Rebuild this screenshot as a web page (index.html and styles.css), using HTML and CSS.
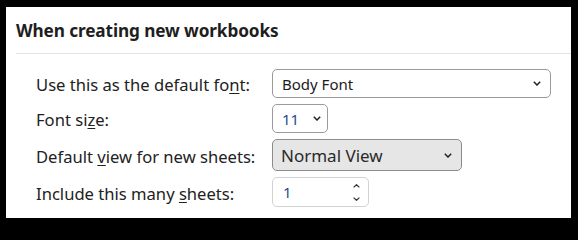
FILE: index.html
```html
<!DOCTYPE html>
<html>
<head>
<meta charset="utf-8">
<link rel="stylesheet" href="styles.css">
</head>
<body>
<section class="panel">
  <h2 class="title">When creating new workbooks</h2>
  <div class="sep"></div>
  <div class="form">
    <label class="lbl l1">Use this as the default fo<u>n</u>t:</label>
    <div class="sel s-font"><span>Body Font</span>
      <svg class="chev" width="8" height="5" viewBox="0 0 8 5"><path d="M0.8 0.8 L4 4 L7.2 0.8" fill="none" stroke="#222" stroke-width="1.5"/></svg>
    </div>

    <label class="lbl l2">Font si<u>z</u>e:</label>
    <div class="sel s-size"><span class="num">11</span>
      <svg class="chev" width="8" height="5" viewBox="0 0 8 5"><path d="M0.8 0.8 L4 4 L7.2 0.8" fill="none" stroke="#222" stroke-width="1.5"/></svg>
    </div>

    <label class="lbl l3">Default <u>v</u>iew for new sheets:</label>
    <div class="sel s-view"><span>Normal View</span>
      <svg class="chev" width="8" height="5" viewBox="0 0 8 5"><path d="M0.8 0.8 L4 4 L7.2 0.8" fill="none" stroke="#222" stroke-width="1.5"/></svg>
    </div>

    <label class="lbl l4">Include this many <u>s</u>heets:</label>
    <div class="spin"><span class="num">1</span>
      <div class="arrows">
        <svg width="7" height="4" viewBox="0 0 7 4"><path d="M0.6 3.4 L3.5 0.7 L6.4 3.4" fill="none" stroke="#333" stroke-width="1.2"/></svg>
        <svg width="7" height="4" viewBox="0 0 7 4"><path d="M0.6 0.6 L3.5 3.3 L6.4 0.6" fill="none" stroke="#333" stroke-width="1.2"/></svg>
      </div>
    </div>
  </div>
</section>
</body>
</html>
```

FILE: styles.css
```css
html, body {
  margin: 0;
  padding: 0;
  background: #000;
}
body {
  width: 578px;
  height: 225px;
  overflow: hidden;
  font-family: "Noto Sans", "Open Sans", sans-serif;
  color: #222;
}
.panel {
  margin: 7px 7px 0 6px;
  width: 565px;
  height: 211px;
  background: #fff;
  box-sizing: border-box;
  padding-top: 12px;
}
.title {
  margin: 0 0 0 10px;
  font-size: 17.2px;
  font-weight: 700;
  line-height: 24px;
  color: #1e1e1e;
  letter-spacing: -0.1px;
}
.sep {
  margin: 10px 0 0 10px;
  height: 1px;
  background: #e3e3e3;
}
.form {
  display: grid;
  grid-template-columns: 236px auto;
  row-gap: 6px;
  margin: 15px 0 0 30px;
  align-items: center;
  justify-items: start;
}
.lbl {
  font-size: 16.6px;
  line-height: 22px;
  color: #222;
  white-space: nowrap;
}
.lbl u {
  text-decoration-thickness: 1px;
  text-underline-offset: 2px;
}
.l1 { padding-top: 2px; }
.l3 { padding-top: 4px; }
.l2, .l4 { padding-top: 3px; }
.sel {
  box-sizing: border-box;
  display: flex;
  align-items: center;
  justify-content: space-between;
  height: 29px;
  border: 1px solid #9a9a9a;
  border-radius: 5px;
  padding: 0 9px 0 9px;
  font-size: 15px;
  color: #1c1c1c;
  background: #fff;
}
.s-font { width: 279px; }
.s-size { width: 56px; padding-right: 6px; }
.s-view {
  width: 190px;
  height: 32px;
  background: #e6e6e6;
  border-color: #8c8c8c;
  font-size: 17px;
  color: #2a2a2a;
  padding-left: 8px;
}
.num { color: #1f4e8f; }
.spin {
  box-sizing: border-box;
  width: 97px;
  height: 30px;
  border: 1px solid #d2d2d2;
  border-radius: 5px;
  display: flex;
  align-items: center;
  justify-content: space-between;
  padding: 0 8px 0 10px;
  font-size: 15px;
}
.arrows {
  display: flex;
  flex-direction: column;
  gap: 9px;
  padding-top: 1px;
}
.arrows svg { display: block; }
.chev { display: block; }
```
